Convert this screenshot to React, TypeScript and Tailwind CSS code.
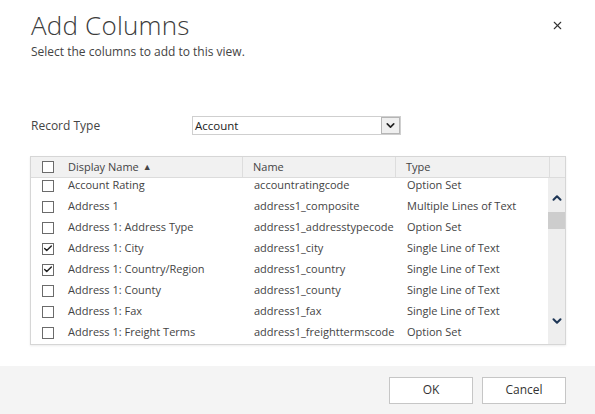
import { X, ChevronDown, ChevronUp, Check } from 'lucide-react';

interface Field {
  display: string;
  name: string;
  type: string;
  checked?: boolean;
}

const fields: Field[] = [
  { display: 'Account Rating', name: 'accountratingcode', type: 'Option Set' },
  { display: 'Address 1', name: 'address1_composite', type: 'Multiple Lines of Text' },
  { display: 'Address 1: Address Type', name: 'address1_addresstypecode', type: 'Option Set' },
  { display: 'Address 1: City', name: 'address1_city', type: 'Single Line of Text', checked: true },
  { display: 'Address 1: Country/Region', name: 'address1_country', type: 'Single Line of Text', checked: true },
  { display: 'Address 1: County', name: 'address1_county', type: 'Single Line of Text' },
  { display: 'Address 1: Fax', name: 'address1_fax', type: 'Single Line of Text' },
  { display: 'Address 1: Freight Terms', name: 'address1_freighttermscode', type: 'Option Set' },
];

function Box({ checked }: { checked?: boolean }) {
  return (
    <span className="w-[12px] h-[12px] border border-[#6b6b6b] bg-white flex items-center justify-center">
      {checked && <Check size={11} strokeWidth={3.5} className="text-[#222]" />}
    </span>
  );
}

export default function App() {
  return (
    <div className="w-[595px] h-[414px] bg-white flex flex-col text-[#444] font-['Segoe_UI','Open_Sans',sans-serif]">
      <div className="flex-1 pl-[31px] pr-[29px] pt-[8px]">
        <div className="flex justify-between items-start">
          <h1 className="text-[26px] font-light leading-[34px] text-[#3c3c3c] tracking-[0.2px]">Add Columns</h1>
          <X size={13} strokeWidth={2} className="mt-[11px] mr-[2px] text-[#333]" />
        </div>
        <p className="text-[12px] leading-[16px] mt-[2px] text-[#444]">Select the columns to add to this view.</p>

        <div className="flex items-center mt-[56px]">
          <span className="w-[161px] text-[12px]">Record Type</span>
          <div className="w-[209px] h-[19px] border border-[#cfcfcf] flex items-center bg-white">
            <span className="flex-1 pl-[2px] text-[11.5px] text-[#222]">Account</span>
            <span className="w-[19px] h-[17px] border border-[#b5b5b5] bg-[#efefef] flex items-center justify-center">
              <ChevronDown size={13} strokeWidth={3} className="text-[#222]" />
            </span>
          </div>
        </div>

        <div className="ml-[-1px] mt-[21px] w-[536px] h-[189px] border border-[#d6d6d6] shadow-[0_1px_2px_rgba(0,0,0,0.08)] flex flex-col text-[11px]">
          <div className="h-[21px] bg-[#f1f1f1] border-b border-[#dcdcdc] flex items-center shrink-0">
            <span className="w-[37px] flex pl-[11px]">
              <Box />
            </span>
            <span className="w-[175px] h-full flex items-center border-r border-[#dddddd]">Display Name <span className="ml-[4px] text-[9px]">▲</span></span>
            <span className="w-[153px] h-full flex items-center border-r border-[#dddddd] pl-[10px]">Name</span>
            <span className="w-[154px] h-full flex items-center border-r border-[#dddddd] pl-[10px]">Type</span>
          </div>
          <div className="flex-1 flex overflow-hidden">
            <div className="flex-1 overflow-hidden">
              <div className="mt-[-3px]">
                {fields.map((f) => (
                  <div key={f.name} className="h-[21px] flex items-center">
                    <span className="w-[37px] flex pl-[11px]">
                      <Box checked={f.checked} />
                    </span>
                    <span className="w-[175px]">{f.display}</span>
                    <span className="w-[153px] pl-[11px]">{f.name}</span>
                    <span className="pl-[11px]">{f.type}</span>
                  </div>
                ))}
              </div>
            </div>
            <div className="w-[17px] bg-[#eeeeee] flex flex-col items-center">
              <ChevronUp size={14} strokeWidth={3.5} className="mt-[13px] text-[#1e3656]" />
              <div className="w-full h-[17px] bg-[#cdcdcd] mt-[7px]" />
              <div className="flex-1" />
              <ChevronDown size={14} strokeWidth={3.5} className="mb-[16px] text-[#1e3656]" />
            </div>
          </div>
        </div>
      </div>
      <div className="h-[48px] bg-[#f4f4f4] flex items-center justify-end gap-[9px] pr-[29px]">
        <button className="w-[84px] h-[27px] bg-white border border-[#c6c6c6] text-[12px] text-[#333]">OK</button>
        <button className="w-[84px] h-[27px] bg-white border border-[#c6c6c6] text-[12px] text-[#333]">Cancel</button>
      </div>
    </div>
  );
}
